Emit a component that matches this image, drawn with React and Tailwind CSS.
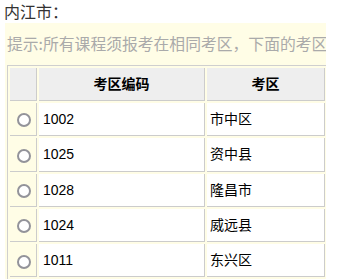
export default function App() {
  const rows = [
    ["1002", "市中区"],
    ["1025", "资中县"],
    ["1028", "隆昌市"],
    ["1024", "威远县"],
    ["1011", "东兴区"],
  ];
  const font = { fontFamily: '"Liberation Sans", "Noto Sans CJK SC", sans-serif' };
  const cjk = { fontFamily: '"Noto Sans CJK SC", "Liberation Sans", sans-serif' };
  return (
    <div className="w-[342px] h-[279px] bg-white overflow-hidden" style={font}>
      <div className="pl-[4px] h-[23px] text-[16px] leading-[22px] text-[#333]" style={cjk}>内江市：</div>
      <div className="ml-[5px] w-[321px] bg-[#fffde6] overflow-hidden pl-[2px] pb-[4px]">
        <div className="h-[42px] pt-[11px] whitespace-nowrap text-[15.8px] leading-[20px] text-[#aaa]" style={cjk}>
          提示:所有课程须报考在相同考区，下面的考区
        </div>
        <table className="border-separate border-spacing-[2px] border-l border-t border-[#cfcfcf] w-[400px] text-[14px] text-black">
          <tbody>
            <tr className="h-[33px]">
              <th className="w-[27px] bg-[#eeeeee] border-r border-b border-[#cccccc]"></th>
              <th className="w-[166px] bg-[#eeeeee] border-r border-b border-[#cccccc] font-bold">考区编码</th>
              <th className="w-[118px] bg-[#eeeeee] border-r border-b border-[#cccccc] font-bold">考区</th>
              <th className="bg-[#eeeeee] border-r border-b border-[#cccccc]"></th>
            </tr>
            {rows.map(([code, name]) => (
              <tr key={code} className="h-[33.3px]">
                <td className="bg-[#fffde6] border-r border-b border-[#cccccc] text-center align-middle">
                  <span className="inline-block w-[14px] h-[14px] rounded-full border-2 border-[#93939a] bg-white align-middle mt-[1px] ml-[1px]"></span>
                </td>
                <td className="bg-white border-r border-b border-[#cccccc] pl-[4px] pt-[1px]">{code}</td>
                <td className="bg-white border-r border-b border-[#cccccc] pl-[3px] pt-[1px]">{name}</td>
                <td className="bg-white border-r border-b border-[#cccccc] pl-[3px]"></td>
              </tr>
            ))}
          </tbody>
        </table>
      </div>
    </div>
  );
}
